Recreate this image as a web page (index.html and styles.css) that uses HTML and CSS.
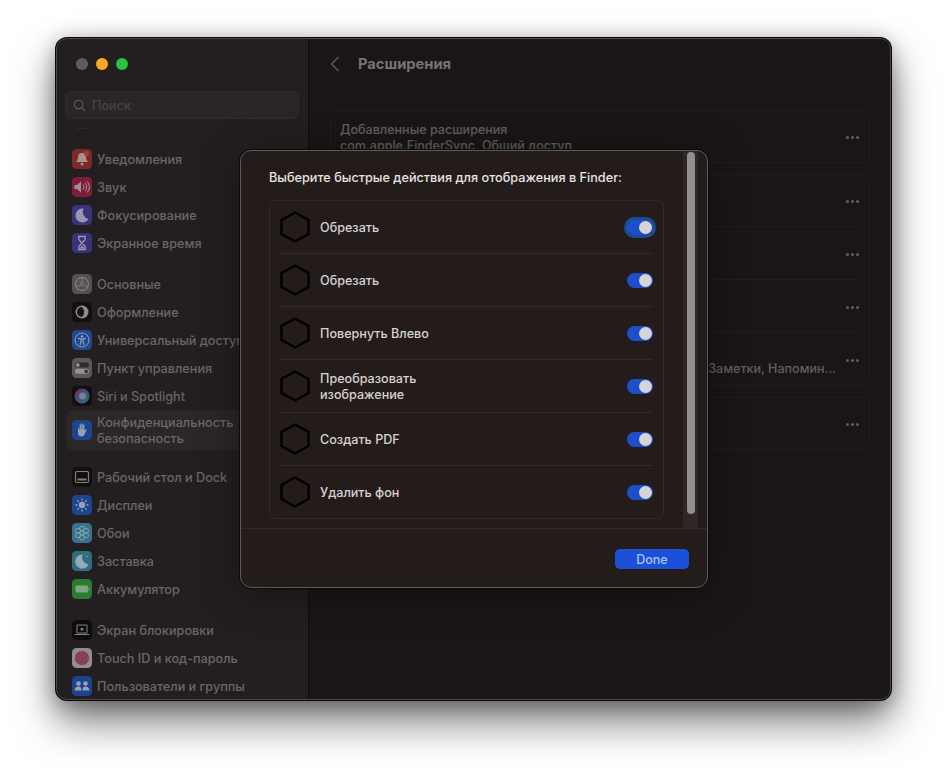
FILE: index.html
```html
<!DOCTYPE html>
<html lang="ru">
<head>
<meta charset="utf-8">
<title>Расширения</title>
<link rel="stylesheet" href="styles.css">
</head>
<body>
<div class="window">
  <aside class="sidebar">
    <div class="lights"><i class="light grey"></i><i class="light orange"></i><i class="light green"></i></div>
    <div class="search">
      <svg class="search-icon" viewBox="0 0 14 14"><circle cx="6" cy="6" r="4.6"/><path d="M9.4 9.4L13 13"/></svg>
      <span>Поиск</span>
    </div>
    <div class="scrolled-edge"></div>

    <div class="group">
      <div class="item"><svg class="ic" viewBox="0 0 20 20"><rect width="20" height="20" rx="4.5" fill="#8c2a2a"/><path d="M10 4c-2.6 0-4 2-4 4.5 0 2-1 3.300-2 4.500h12c-1-1.200-2-2.500-2-4.500C14 6 12.600 4 10 4z" fill="#b9a3a0"/><circle cx="10" cy="15" r="1.500" fill="#b9a3a0"/><circle cx="14.500" cy="4.500" r="2.500" fill="#a34a44"/></svg><span>Уведомления</span></div>
      <div class="item"><svg class="ic" viewBox="0 0 20 20"><rect width="20" height="20" rx="4.5" fill="#8a1f3f"/><path d="M2.500 8h2.500l4-3.500v11L5 12H2.500z" fill="#b9a0a6"/><path d="M11 7.500a3.500 3.500 0 0 1 0 5M13 6a5.500 5.500 0 0 1 0 8M15 4.500a7.500 7.500 0 0 1 0 11" fill="none" stroke="#b9a0a6"/></svg><span>Звук</span></div>
      <div class="item"><svg class="ic" viewBox="0 0 20 20"><rect width="20" height="20" rx="4.5" fill="#3d3787"/><path d="M11.500 3.500a7 7 0 1 0 5 10.500A7.500 7.500 0 0 1 11.500 3.500z" fill="#a9a7c4"/></svg><span>Фокусирование</span></div>
      <div class="item"><svg class="ic" viewBox="0 0 20 20"><rect width="20" height="20" rx="4.5" fill="#3c3686"/><path d="M6 3.500h8M6 16.500h8M6.800 4v2.500L13.200 13.500V16M13.200 4v2.500L6.800 13.500V16" fill="none" stroke="#aaa8c6" stroke-width="1.300"/><path d="M7.500 15.500l2.500-3 2.500 3z" fill="#aaa8c6"/></svg><span>Экранное время</span></div>
    </div>

    <div class="group">
      <div class="item"><svg class="ic" viewBox="0 0 20 20"><rect width="20" height="20" rx="4.5" fill="#5b5857"/><circle cx="10" cy="10" r="6.500" fill="none" stroke="#8d8a89" stroke-width="1.300"/><circle cx="10" cy="10" r="1.500" fill="none" stroke="#8d8a89"/><path d="M10 3.500V8.500M4.500 13l4.200-2.200M15.500 13l-4.200-2.200" stroke="#8d8a89"/></svg><span>Основные</span></div>
      <div class="item"><svg class="ic" viewBox="0 0 20 20"><rect width="20" height="20" rx="4.5" fill="#0f0d0d"/><circle cx="10" cy="10" r="6.500" fill="#9d9a99"/><path d="M10 5a5 5 0 0 0 0 10c1.500-1.500 2-3 2-5s-.5-3.500-2-5z" fill="#151212"/></svg><span>Оформление</span></div>
      <div class="item"><svg class="ic" viewBox="0 0 20 20"><rect width="20" height="20" rx="4.5" fill="#1d4f9e"/><circle cx="10" cy="10" r="7" fill="none" stroke="#9fb3d2"/><circle cx="10" cy="6.500" r="1.200" fill="#9fb3d2"/><path d="M6 8.300l3 .7v2.500L8 15M14 8.300l-3 .7v2.500l1 3.500M9 9h2" fill="none" stroke="#9fb3d2" stroke-width="1.200"/></svg><span>Универсальный доступ</span></div>
      <div class="item"><svg class="ic" viewBox="0 0 20 20"><rect width="20" height="20" rx="4.5" fill="#636060"/><rect x="3" y="4.500" width="14" height="5" rx="2.500" fill="#2f2d2d"/><circle cx="5.800" cy="7" r="1.900" fill="#a5a2a1"/><rect x="3" y="10.800" width="14" height="5" rx="2.500" fill="#a5a2a1"/><circle cx="14.200" cy="13.300" r="1.900" fill="#3a3838"/></svg><span>Пункт управления</span></div>
      <div class="item"><svg class="ic" viewBox="0 0 20 20"><defs><linearGradient id="siri" x1="0" y1="0" x2="1" y2="1"><stop offset="0" stop-color="#8a2e55"/><stop offset=".55" stop-color="#3a5f8d"/><stop offset="1" stop-color="#3a7d78"/></linearGradient></defs><rect width="20" height="20" rx="4.5" fill="#100d10"/><circle cx="10" cy="10" r="7.500" fill="url(#siri)"/><circle cx="10.500" cy="10" r="3.500" fill="#9ba7b5" opacity=".7"/></svg><span>Siri и Spotlight</span></div>
      <div class="item selected"><svg class="ic" viewBox="0 0 20 20"><rect width="20" height="20" rx="4.5" fill="#1c4a9b"/><path d="M6 8.500c0-.8 1.200-.8 1.200 0V10h.4V5c0-.9 1.300-.9 1.300 0v4.500h.4V4c0-.9 1.400-.9 1.400 0v5.500h.4V5c0-.9 1.300-.9 1.300 0v6l.8-1.500c.5-.8 1.600-.3 1.200.6l-1.700 4.200c-.5 1.200-1.500 2.200-3.200 2.200H9.500C7.300 16.500 6 15 6 13z" fill="#a7b1c4"/></svg><span>Конфиденциальность&ensp;и безопасность</span></div>
    </div>

    <div class="group">
      <div class="item"><svg class="ic" viewBox="0 0 20 20"><rect width="20" height="20" rx="4.5" fill="#0f0d0d"/><rect x="3.500" y="4.500" width="13" height="11" rx="1.500" fill="none" stroke="#8f8c8b" stroke-width="1.200"/><rect x="5.500" y="11.500" width="9" height="2" fill="#8f8c8b"/></svg><span>Рабочий стол и Dock</span></div>
      <div class="item"><svg class="ic" viewBox="0 0 20 20"><rect width="20" height="20" rx="4.5" fill="#1c4b9c"/><circle cx="10" cy="10" r="3.200" fill="#a8b5cb"/><path d="M10 3.500v2M10 14.500v2M3.500 10h2M14.500 10h2M5.400 5.400l1.400 1.400M13.200 13.200l1.400 1.400M5.400 14.600l1.400-1.400M13.200 6.800l1.400-1.400" stroke="#a8b5cb" stroke-width="1.300"/></svg><span>Дисплеи</span></div>
      <div class="item"><svg class="ic" viewBox="0 0 20 20"><rect width="20" height="20" rx="4.5" fill="#3b7d9b"/><g fill="none" stroke="#8fb6c4"><circle cx="10" cy="5.500" r="2.500"/><circle cx="10" cy="14.500" r="2.500"/><circle cx="6" cy="7.800" r="2.500"/><circle cx="14" cy="7.800" r="2.500"/><circle cx="6" cy="12.200" r="2.500"/><circle cx="14" cy="12.200" r="2.500"/><circle cx="10" cy="10" r="2"/></g></svg><span>Обои</span></div>
      <div class="item"><svg class="ic" viewBox="0 0 20 20"><rect width="20" height="20" rx="4.5" fill="#34788f"/><path d="M10.500 3.500a7 7 0 1 0 6 10A7.500 7.500 0 0 1 10.500 3.500z" fill="#a3bfc9"/><circle cx="15" cy="5.500" r=".8" fill="#a3bfc9"/></svg><span>Заставка</span></div>
      <div class="item"><svg class="ic" viewBox="0 0 20 20"><rect width="20" height="20" rx="4.5" fill="#2c8a32"/><rect x="3.500" y="6.500" width="12.500" height="7" rx="1.500" fill="#8fb892"/><rect x="16.300" y="8.800" width="1" height="2.400" fill="#8fb892"/></svg><span>Аккумулятор</span></div>
    </div>

    <div class="group">
      <div class="item"><svg class="ic" viewBox="0 0 20 20"><rect width="20" height="20" rx="4.5" fill="#0b0a0a"/><path d="M5 5h10v8H5z" fill="none" stroke="#908d8c"/><path d="M2.500 14.500h15" stroke="#908d8c"/><rect x="8.700" y="8" width="2.600" height="2.500" fill="#908d8c"/></svg><span>Экран блокировки</span></div>
      <div class="item"><svg class="ic" viewBox="0 0 20 20"><rect width="20" height="20" rx="4.5" fill="#a39a9b"/><circle cx="10" cy="10" r="7" fill="#8f3a55"/><g fill="none" stroke="#a2576f" stroke-width=".8"><circle cx="10" cy="10" r="5.500"/><circle cx="10" cy="10" r="3.700"/><circle cx="10" cy="10" r="2"/></g></svg><span>Touch ID и код-пароль</span></div>
      <div class="item"><svg class="ic" viewBox="0 0 20 20"><rect width="20" height="20" rx="4.5" fill="#1c4b9c"/><g fill="#aab4c7"><circle cx="6.500" cy="7.500" r="2.300"/><circle cx="13.500" cy="7.500" r="2.300"/><path d="M2.500 14.500c0-2.500 1.800-4 4-4s3 1.500 3 4zM10.500 14.500c0-2.500 1-4 3-4s4 1.500 4 4z"/></g></svg><span>Пользователи и группы</span></div>
    </div>
  </aside>

  <main class="content">
    <header class="titlebar">
      <svg class="back" viewBox="0 0 10 16"><path d="M8.500 1L1.500 8l7 7"/></svg>
      <h1>Расширения</h1>
    </header>

    <section class="card">
      <div class="row">
        <div class="row-text"><div>Добавленные расширения</div><div>com.apple.FinderSync, Общий доступ</div></div>
        <span class="more"></span>
      </div>
    </section>

    <section class="card">
      <div class="row"><div class="row-text"></div><span class="more"></span></div>
      <div class="row"><div class="row-text"></div><span class="more"></span></div>
      <div class="row"><div class="row-text"></div><span class="more"></span></div>
      <div class="row">
        <div class="row-text trailing"><div>&nbsp;</div><div>Заметки, Напомин...</div></div>
        <span class="more"></span>
      </div>
    </section>

    <section class="card">
      <div class="row"><div class="row-text"></div><span class="more"></span></div>
    </section>
  </main>

  <div class="modal">
    <div class="modal-body">
      <div class="modal-main">
        <h2>Выберите быстрые действия для отображения в Finder:</h2>
        <div class="list">
          <div class="action">
            <svg class="hex" viewBox="0 0 30 32"><path d="M15 1.500L28.500 9v14L15 30.500 1.500 23V9z"/></svg>
            <span class="label">Обрезать</span>
            <span class="toggle focused"><i></i></span>
          </div>
          <div class="action">
            <svg class="hex" viewBox="0 0 30 32"><path d="M15 1.500L28.500 9v14L15 30.500 1.500 23V9z"/></svg>
            <span class="label">Обрезать</span>
            <span class="toggle"><i></i></span>
          </div>
          <div class="action">
            <svg class="hex" viewBox="0 0 30 32"><path d="M15 1.500L28.500 9v14L15 30.500 1.500 23V9z"/></svg>
            <span class="label">Повернуть Влево</span>
            <span class="toggle"><i></i></span>
          </div>
          <div class="action">
            <svg class="hex" viewBox="0 0 30 32"><path d="M15 1.500L28.500 9v14L15 30.500 1.500 23V9z"/></svg>
            <span class="label">Преобразовать<br>изображение</span>
            <span class="toggle"><i></i></span>
          </div>
          <div class="action">
            <svg class="hex" viewBox="0 0 30 32"><path d="M15 1.500L28.500 9v14L15 30.500 1.500 23V9z"/></svg>
            <span class="label">Создать PDF</span>
            <span class="toggle"><i></i></span>
          </div>
          <div class="action">
            <svg class="hex" viewBox="0 0 30 32"><path d="M15 1.500L28.500 9v14L15 30.500 1.500 23V9z"/></svg>
            <span class="label">Удалить фон</span>
            <span class="toggle"><i></i></span>
          </div>
        </div>
      </div>
      <div class="scrollbar"><div class="thumb"></div></div>
    </div>
    <footer class="modal-footer"><button class="done" type="button">Done</button></footer>
  </div>
</div>
</body>
</html>
```
FILE: styles.css
```css
* { box-sizing: border-box; }
html, body { height: 100%; }
body {
  margin: 0;
  padding: 38px 56px 74px;
  background: #fff;
  font-family: Inter, "Noto Sans", "Liberation Sans", sans-serif;
  overflow: hidden;
}
.window {
  position: relative;
  display: flex;
  width: 835px;
  height: 662px;
  border-radius: 11px;
  overflow: hidden;
  background: #1a1617;
  box-shadow: 0 0 0 1px #0a0808, 0 22px 42px rgba(0,0,0,.5), 0 4px 22px rgba(0,0,0,.35);
}
.window::after {
  content: "";
  position: absolute;
  inset: 0;
  border: 1px solid #4a4747;
  border-radius: 11px;
  pointer-events: none;
}
.sidebar {
  width: 253px;
  flex: none;
  background: #231f20;
  border-right: 1px solid #0c0a0a;
  padding: 0 9px 0 10px;
  color: #6a6666;
  font-size: 12.650px;
  font-weight: 500;
}
.lights { display: flex; gap: 8px; padding: 20px 0 0 10px; height: 53px; }
.light { width: 12px; height: 12px; border-radius: 50%; }
.light.grey { background: #5f5c5c; }
.light.orange { background: #f9a825; }
.light.green { background: #28c33c; }
.search {
  display: flex;
  align-items: center;
  gap: 6px;
  height: 28px;
  margin-left: -1px;
  padding-left: 7px;
  border-radius: 6px;
  background: #2a2627;
  border: 1px solid #2f2b2c;
  color: #474343;
  font-size: 12.650px;
}
.search-icon { width: 13px; height: 13px; fill: none; stroke: #625e5e; stroke-width: 1.200; }
.scrolled-edge { width: 14px; height: 1px; margin: 9px 0 16px 10px; background: #2e2a2b; }
.group { padding-bottom: 13px; }
.item {
  display: flex;
  align-items: center;
  gap: 5px;
  min-height: 28px;
  padding-left: 6px;
  line-height: 16px;
  width: 232px;
}
.item span { width: 160px; margin-top: 2px; }
.item.selected {
  height: 40px;
  border-radius: 6px;
  background: linear-gradient(90deg, #2b2728 70%, #262223);
}
.ic { width: 20px; height: 20px; flex: none; opacity: .88; }

.content { flex: 1; padding: 0 21px; color: #625e5e; font-size: 12.550px; font-weight: 500; }
.titlebar { display: flex; align-items: center; height: 51px; gap: 18px; }
.back { width: 10px; height: 16px; fill: none; stroke: #5c5858; stroke-width: 1.500; }
.titlebar h1 { margin: 0; font-size: 14.700px; font-weight: 700; color: #777373; }
.card { margin-bottom: 11px; box-shadow: inset 0 0 0 1px #211d1e; border-radius: 6px; padding: 0 12px 0 10px; }
.titlebar + .card { margin-top: 21px; }
.row { display: flex; align-items: center; height: 53px; border-bottom: 1px solid #211d1e; }
.row:last-child { border-bottom: 0; }
.row-text { flex: 1; padding-top: 2px; line-height: 16px; white-space: nowrap; }
.row-text.trailing { text-align: right; padding-right: 10px; }
.more {
  width: 3px;
  height: 3px;
  margin: 2px 9px 0 0;
  border-radius: 50%;
  background: #5f5b5b;
  box-shadow: 5px 0 0 #5f5b5b, 10px 0 0 #5f5b5b;
}

.modal {
  position: absolute;
  left: 184px;
  top: 112px;
  width: 468px;
  height: 438px;
  display: flex;
  flex-direction: column;
  border-radius: 11px;
  background: #241c1b;
  border: 1px solid #5f5b5a;
  box-shadow: 0 0 0 1px #0b0909, 0 6px 40px rgba(0,0,0,.4);
  overflow: hidden;
}
.modal-body { display: flex; height: 378px; border-bottom: 1px solid #322b29; }
.modal-main { flex: 1; padding: 18px 19px 0 28px; }
h2 { margin: 0; font-size: 12.700px; line-height: 18px; font-weight: 500; color: #e6e3e2; }
.list { margin-top: 13px; width: 395px; border: 1px solid #312a28; border-radius: 6px; padding: 0 10px; }
.action { display: flex; align-items: center; height: 53px; border-bottom: 1px solid #322b29; }
.action:last-child { border-bottom: 0; height: 52px; }
.hex { width: 30px; height: 32px; flex: none; fill: none; stroke: #000; stroke-width: 2.300; }
.label { flex: 1; margin: 2px 0 0 10px; font-size: 12.600px; line-height: 16px; font-weight: 500; color: #d6d2d1; }
.toggle { position: relative; display: block; width: 26px; height: 15px; border-radius: 8px; background: #1e4fcb; }
.toggle i { position: absolute; right: 1px; top: 1px; width: 13px; height: 13px; border-radius: 50%; background: #d6d4d4; }
.toggle.focused { box-shadow: 0 0 0 3px #1e4c8b; }
.scrollbar { width: 15px; margin-right: 9px; padding: 1px 4px; background: #2e2725; }
.thumb { width: 8px; height: 362px; border-radius: 4px; background: #918e8d; }
.modal-footer { flex: 1; display: flex; justify-content: flex-end; padding: 20px 18px 0 0; }
.done {
  width: 74px;
  height: 20px;
  padding: 0;
  border: 0;
  border-radius: 5px;
  background: #1d50d8;
  color: #a9c2f0;
  font: 500 12.500px Inter, "Liberation Sans", sans-serif;
}
```
